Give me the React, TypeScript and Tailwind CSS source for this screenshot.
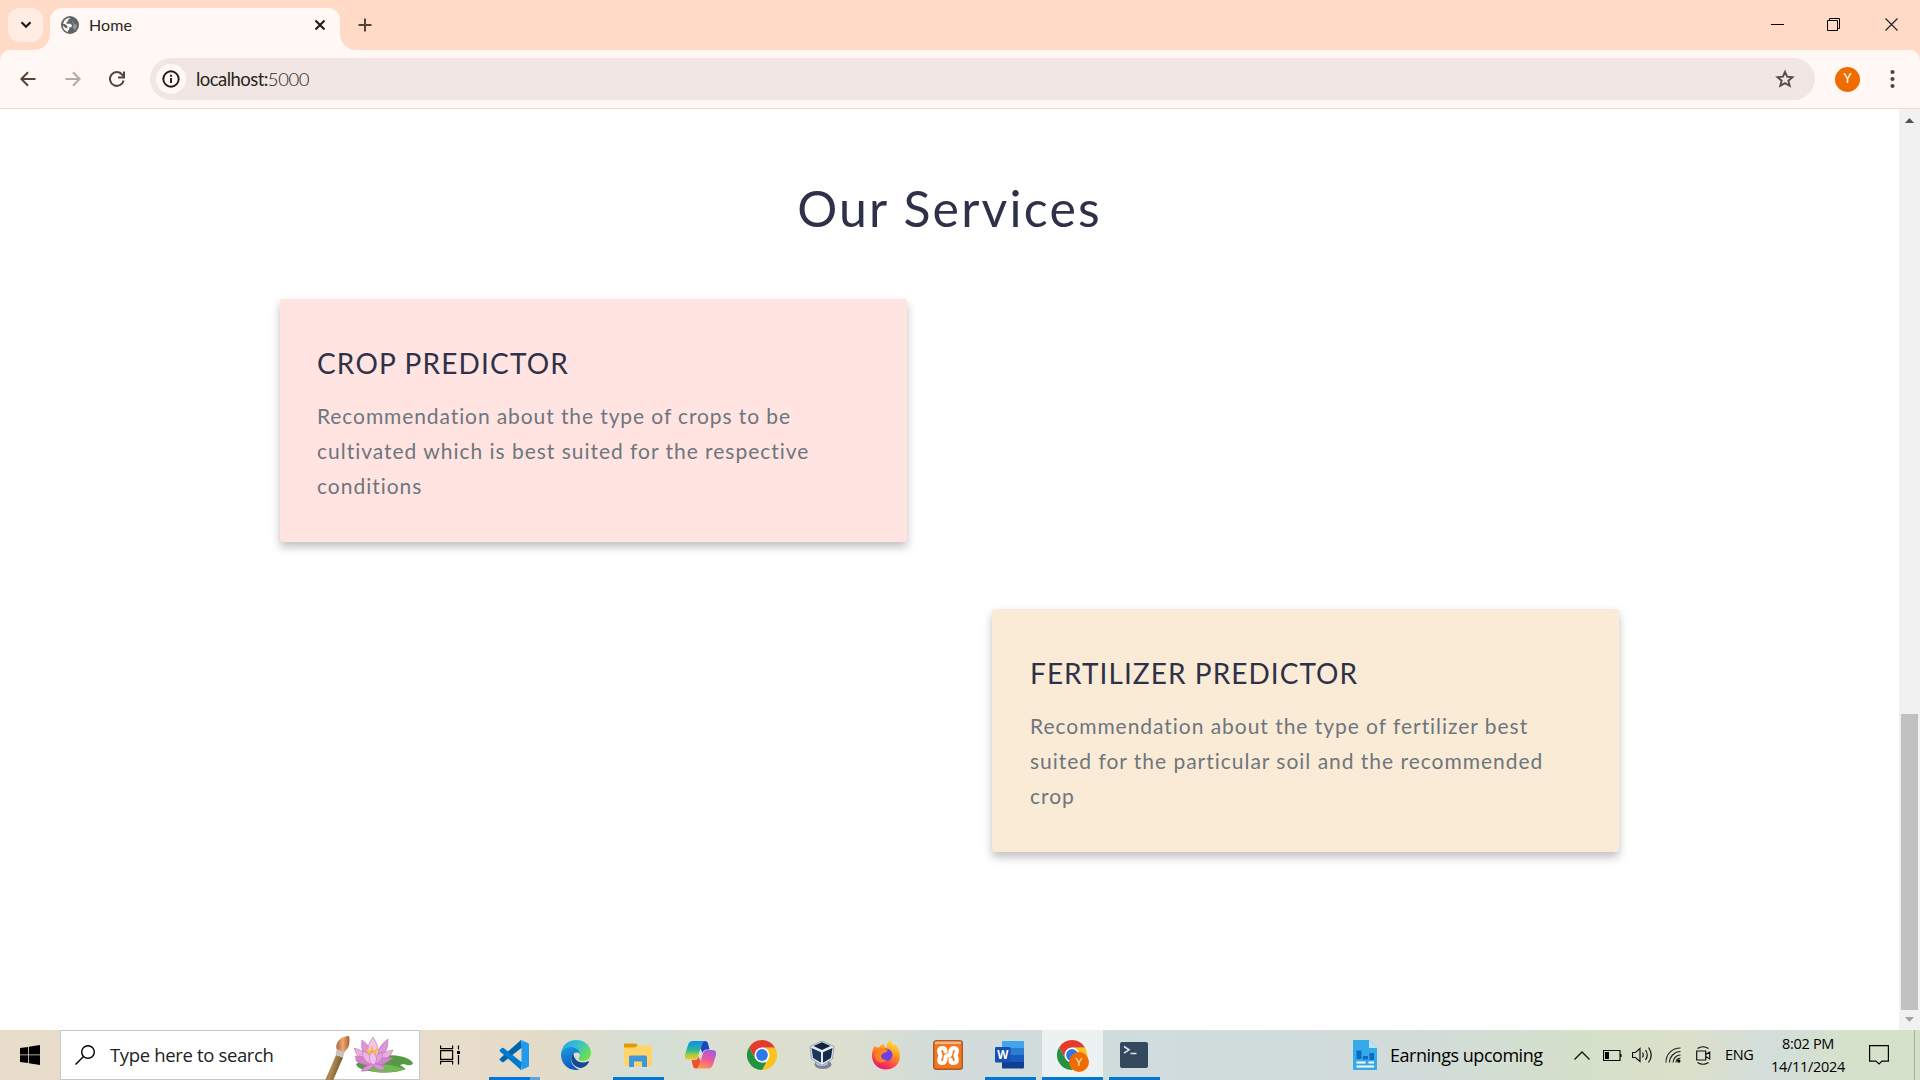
import React from "react";

const ui = "font-['Lato',sans-serif]";
const sys = "font-['Open_Sans',sans-serif]";

function TabStrip() {
  return (
    <div className="flex h-[50px] w-full items-start bg-[#ffdbc7]">
      <div className="mt-2 ml-2 flex h-[34px] w-[35px] items-center justify-center rounded-[12px] bg-[#ffece2]">
        <svg width="12" height="8" viewBox="0 0 12 8" fill="none" stroke="#221a15" strokeWidth="2.3"><path d="M1.5 1.2 6 5.7l4.500-4.500" /></svg>
      </div>
      <svg className="mt-[34px] ml-[-9px] shrink-0" width="16" height="16"><path d="M16 0v16H0C9 16 16 9 16 0z" fill="#fff8f5" /></svg>
      <div className="mt-[7.500px] flex h-[42.500px] w-[290px] shrink-0 items-center rounded-t-[12px] bg-[#fff8f5] pb-[8px] pl-[11px]">
        <svg className="shrink-0" width="18" height="18" viewBox="0 0 18 18">
          <circle cx="9" cy="9" r="9" fill="#5f6368" />
          <path d="M10 2.200C7.800 2.500 7 3.500 7.200 5L5.500 6.200v1.600h4l1.500 1.500-.6 2H8.200v2.200l-1.400 1.300v1.400C3.500 15 1.800 12.300 1.800 9.200l3 3h1.500V10L3.800 7.900l-1.600.1C2.600 4.500 5.500 1.800 9 1.700z" fill="#fff8f5" />
          <path d="M12.300 2.600v2.100l-1.800 1.500 2.200.4 1.300 1.600 2.200.6c0 2.500-1.200 4.400-3 5.700l-.5-2-1.200-1.100.8-2.200" fill="#fff8f5" opacity=".35" />
        </svg>
        <span className={`${ui} ml-[10px] w-[222px] shrink-0 text-[16px] leading-5 tracking-[0.100px] text-[#2b2521]`}>Home</span>
        <svg className="ml-[3px] shrink-0" width="12" height="12" viewBox="0 0 12 12" stroke="#221a15" strokeWidth="2.100"><path d="M1.500 1.500l9 9M10.500 1.500l-9 9" /></svg>
      </div>
      <svg className="mt-[34px] shrink-0" width="16" height="16"><path d="M0 0v16h16C7 16 0 9 0 0z" fill="#fff8f5" /></svg>
      <svg className="mt-[18px] ml-[2px]" width="14" height="14" viewBox="0 0 14 14" stroke="#564338" strokeWidth="2"><path d="M7 .5v13M.5 7h13" /></svg>
      <div className="grow" />
      <svg className="mt-[18px] mr-[43px]" width="13" height="13" stroke="#000" strokeWidth="1"><path d="M0 6.500h13" /></svg>
      <svg className="mt-[18px] mr-[45px]" width="13" height="13" fill="none" stroke="#000" strokeWidth="1"><path d="M.5 2.500h10v10H.500zM2.500 2.500V.500h10v10h-2" /></svg>
      <svg className="mt-[18px] mr-[22px]" width="13" height="13" stroke="#222" strokeWidth="1.200"><path d="M.5.500l12 12M12.500.500l-12 12" /></svg>
    </div>
  );
}

function Toolbar() {
  return (
    <div className="h-[59px] bg-[#ffdbc7]">
      <div className="flex h-[59px] items-center rounded-t-[10px] border-b border-[#fbd8c7] bg-[#fff8f5]">
        <svg className="ml-[20px]" width="16" height="16" viewBox="0 0 16 16" fill="none" stroke="#564338" strokeWidth="2"><path d="M15.500 8H1.500M8 1.200 1.400 8 8 14.800" /></svg>
        <svg className="ml-[29px]" width="16" height="16" viewBox="0 0 16 16" fill="none" stroke="#b5aaa5" strokeWidth="2"><path d="M.5 8h14M8 1.200 14.600 8 8 14.800" /></svg>
        <svg className="ml-[28px]" width="16" height="16" viewBox="0 0 16 16" fill="none" stroke="#564338" strokeWidth="2"><path d="M14.600 9.500A6.900 6.900 0 1 1 13.400 3.800l1.200 1.700" /><path d="M15 .5v6H9" /></svg>
        <div className="ml-[25px] flex h-[42px] w-[1665px] items-center rounded-full bg-[#f1e6e4] pl-[6px]">
          <div className="flex h-[30px] w-[30px] items-center justify-center rounded-full bg-[#fff8f5]">
            <svg width="18" height="18" viewBox="0 0 18 18" fill="none" stroke="#221a15" strokeWidth="1.900"><circle cx="9" cy="9" r="7.700" /><path d="M9 8v5M9 4.800v2" /></svg>
          </div>
          <div className={`${ui} ml-[10px] grow text-[18.500px] leading-6 tracking-[-0.550px] text-[#2b2420]`}>localhost:<span className="font-light tracking-[-0.400px]">5000</span></div>
          <svg className="mr-[20px]" width="20" height="20" viewBox="0 0 20 20" fill="none" stroke="#564c48" strokeWidth="1.900"><path d="M10 2.800l2.100 4.900 5.400.5-4.100 3.500 1.300 5.200L10 14.200l-4.700 2.700 1.300-5.200-4.100-3.500 5.400-.5z" /></svg>
        </div>
        <div className={`${ui} ml-5 flex h-[25px] w-[25px] items-center justify-center rounded-full bg-[#ef6c00] text-[13px] text-white`}>Y</div>
        <svg className="ml-[30px]" width="5" height="20" fill="#564338"><circle cx="2.500" cy="3" r="2.100" /><circle cx="2.500" cy="10" r="2.100" /><circle cx="2.500" cy="17" r="2.100" /></svg>
      </div>
    </div>
  );
}

type Line = { text: string; tracking: string };
type CardProps = { title: string; lines: Line[]; className: string; titleClass: string; };

function ServiceCard({ title, lines, className, titleClass }: CardProps) {
  return (
    <div className={`${ui} h-[243px] w-[627px] rounded-[3px] pt-[44px] shadow-[0_5px_10px_rgba(0,0,0,0.25)] ${className}`}>
      <h2 className={`text-[28px] leading-10 font-normal text-[#2f3148] ${titleClass}`}>{title}</h2>
      <p className="mt-[15px] text-[21px] leading-[35px] text-[#6e767d]">
        {lines.map((l) => (<span key={l.text} className={`block whitespace-nowrap ${l.tracking}`}>{l.text}</span>))}
      </p>
    </div>
  );
}

function Page() {
  return (
    <div className="flex h-[921px] bg-white">
      <main className="flex w-[1899px] flex-col">
        <h1 className={`${ui} mt-[69px] h-[60px] text-center text-[50px] leading-[60px] tracking-[2.200px] text-[#2f3148]`}>Our Services</h1>
        <ServiceCard className="mt-[61px] ml-[280px] bg-[#ffe4e1] pl-[37px]" titleClass="tracking-[1.170px]" title="CROP PREDICTOR"
          lines={[
            { text: "Recommendation about the type of crops to be", tracking: "tracking-[0.900px]" },
            { text: "cultivated which is best suited for the respective", tracking: "tracking-[0.980px]" },
            { text: "conditions", tracking: "tracking-[0.980px]" },
          ]} />
        <ServiceCard className="mt-[67px] ml-[992px] bg-[#faebd7] pl-[38px]" titleClass="tracking-[1.050px]" title="FERTILIZER PREDICTOR"
          lines={[
            { text: "Recommendation about the type of fertilizer best", tracking: "tracking-[0.960px]" },
            { text: "suited for the particular soil and the recommended", tracking: "tracking-[0.980px]" },
            { text: "crop", tracking: "tracking-[0.980px]" },
          ]} />
      </main>
      <div className="flex w-[21px] flex-col items-center bg-[#f1f1f1]">
        <svg className="mt-[9px]" width="9" height="5"><path d="M0 5h9L4.500 0z" fill="#505050" /></svg>
        <div className="mt-[591px] h-[296px] w-[17px] bg-[#c1c1c1]" />
        <svg className="mt-[7px]" width="9" height="5"><path d="M0 0h9L4.500 5z" fill="#a3a3a3" /></svg>
      </div>
    </div>
  );
}

const VSCode = () => (
  <svg width="30" height="30" viewBox="0 0 30 30">
    <path d="M22 0 1 18.500a1.200 1.200 0 0 0 0 1.800L3 22q.8.600 1.700 0L23 7.500z" fill="#0065a9" />
    <path d="M22 30 1 11.500a1.200 1.200 0 0 1 0-1.800L3 8q.8-.6 1.700 0L23 22.500z" fill="#007acc" />
    <path d="M22 0l7 3q1 .5 1 1.600v20.800q0 1.100-1 1.600l-7 3q-1 0-1.500-.7 2 1 2-1.400V2.100q0-2.400-2-1.400z" fill="#1f9cf0" />
  </svg>
);
const Edge = () => (
  <svg width="30" height="30" viewBox="0 0 30 30">
    <defs>
      <linearGradient id="eg1" x1="0" y1="0" x2="1" y2=".6"><stop offset="0" stopColor="#2a9fe0" /><stop offset=".5" stopColor="#35c1d0" /><stop offset="1" stopColor="#6be04e" /></linearGradient>
      <linearGradient id="eg2" x1="0" y1="0" x2=".4" y2="1"><stop offset="0" stopColor="#1b9de2" /><stop offset="1" stopColor="#0c59c0" /></linearGradient>
    </defs>
    <path d="M0 14C1 5 7 0 15 0c9 0 15 6 15 13 0 5-4 8-8 8-3 0-5-1-4.500-2.500C21 14 17 9 11 9 5 9 1 12 0 16z" fill="url(#eg1)" />
    <path d="M0 14.500C1 9 6 7 10 7c5 0 9 4 9 7-3-3-9-1-9 5 0 6 5 10 9 10.500C9 32 0 25 0 14.500z" fill="url(#eg2)" />
    <path d="M12.500 13C8 17 10 26 19 28c4 0 7-2.500 9-6 .4-.7 0-1-.8-.7-8 3.500-15-1.300-14.700-8.300z" fill="#114a94" />
  </svg>
);
const Folder = () => (
  <svg width="28" height="24" viewBox="0 0 28 24">
    <path d="M0 1.500Q0 .5 1 .5h11l2 2-2 2.500H0z" fill="#e09d00" />
    <path d="M0 4.500h11l3-2h13q1 0 1 1V22q0 1-1 1H1q-1 0-1-1z" fill="#ffd468" />
    <path d="M5 24V14q0-1.500 1.500-1.500h15Q23 12.500 23 14v10h-5v-5.500h-8V24z" fill="#3f97d8" />
  </svg>
);
const Copilot = () => (
  <svg width="31" height="28" viewBox="0 0 31 28">
    <defs>
      <linearGradient id="cp1" x1="0" y1="0" x2="0" y2="1"><stop offset="0" stopColor="#0a8fe8" /><stop offset=".5" stopColor="#2fb59a" /><stop offset=".75" stopColor="#a8cc3a" /><stop offset="1" stopColor="#f2c526" /></linearGradient>
      <linearGradient id="cp2" x1=".7" y1="0" x2=".3" y2="1"><stop offset="0" stopColor="#a05be0" /><stop offset=".5" stopColor="#f0589a" /><stop offset="1" stopColor="#fb9a48" /></linearGradient>
    </defs>
    <path d="M8 0h13q-3 0-4 3l-4 12q-1 3.500-4 3.500H4q-5 0-4-5L3 4Q4.200 0 8 0z" fill="url(#cp1)" />
    <path d="M23 27.500H10q3 0 4-3l4-12q1-3.500 4-3.500h5q5 0 4 5l-3 9.500q-1.200 4-5 4z" fill="url(#cp2)" />
    <path d="M15.500 7.500 17 3q1-3 3-3 2.500 0 3.200 3l1.300 5.500h-3q-3 0-4 3.500z" fill="#1748c0" />
    <path d="M15.500 20 14 24.500q-1 3-3 3-2.500 0-3.200-3L6.500 19h3q3 0 4-3.500z" fill="#ee5130" />
  </svg>
);
const Chrome = ({ badge = false }: { badge?: boolean }) => (
  <svg width={badge ? 32 : 30} height={badge ? 32 : 30} viewBox={badge ? "0 0 32 32" : "0 0 30 30"}>
    <path d="M15 7.500h13A15 15 0 0 1 15 30l6.500-11.300z" fill="#fcc31e" />
    <path d="M15 0a15 15 0 0 1 13 7.500H15L8.500 18.700 2 7.500A15 15 0 0 1 15 0z" fill="#e33b2e" />
    <path d="M2 7.500l6.500 11.300L15 22.500h4.300L15 30A15 15 0 0 1 2 7.500z" fill="#229342" />
    <circle cx="15" cy="15" r="7.500" fill="#fff" /><circle cx="15" cy="15" r="5.900" fill="#2f78ea" />
    {badge && <><circle cx="22" cy="22" r="10" fill="#ef6c00" /><text x="22" y="26" fontSize="11" fontFamily="Lato" textAnchor="middle" fill="#ffe3cc">Y</text></>}
  </svg>
);
const VBox = () => (
  <svg className="relative -left-[2px]" width="26" height="30" viewBox="0 0 26 30">
    <ellipse cx="14" cy="24.500" rx="8.500" ry="4.500" fill="#7c849a" /><ellipse cx="13" cy="23" rx="6" ry="3" fill="#c4cad6" />
    <path d="M13 1 25 6.500 23.500 19 13 25.500 2.500 19 1 6.500z" fill="#e4e9f1" stroke="#8693aa" strokeWidth=".8" />
    <path d="M13 2.200 21.500 6 13 10 4.500 6z" fill="#10233f" />
    <path d="M2.500 8 12 12.300V22.800L4 18z" fill="#1d365d" />
    <path d="M23.500 8 14 12.300V22.800L22 18z" fill="#142b4c" />
  </svg>
);
const Firefox = () => (
  <svg width="30" height="30" viewBox="0 0 30 30">
    <defs><linearGradient id="ff" x1=".8" y1="0" x2=".3" y2="1"><stop offset="0" stopColor="#ffe838" /><stop offset=".4" stopColor="#ff9a20" /><stop offset=".75" stopColor="#ff3e4e" /><stop offset="1" stopColor="#e5127a" /></linearGradient></defs>
    <path d="M3.500 6C5 7 6 7.500 8 7.500c1.500-2 3-3 5-3.500 0 2 1 3 3 4C15 4 17 2 19.500 0c.5 3 2 4 4 6 0-1 0-2-.5-3 4 4 6 8 6 13 0 8-6 13.500-14 13.500S1 23.500 1 16c0-4 1-7 2.500-10z" fill="url(#ff)" />
    <circle cx="15" cy="15" r="6.500" fill="#7340dd" />
    <path d="M4 9q4-2 8-.5 2 1 5 1-1 3-4 3.500-3 1-3 3.500 1 4 6 3.500-4 4-9 1.500C3 19 3 13 4 9z" fill="#ff8420" />
  </svg>
);
const Xampp = () => (
  <svg width="30" height="30" viewBox="0 0 30 30">
    <rect x=".7" y=".7" width="28.600" height="28.600" rx="2.500" fill="#f2771e" stroke="#a9592a" strokeWidth="1.400" />
    <path d="M2 1.500h26v2.500H2z" fill="#f9b27e" />
    <g fill="none" stroke="#fff" strokeWidth="4.200" strokeLinecap="round" strokeLinejoin="round">
      <path d="M12.500 11.500C12.500 9 11.500 8 9.500 8 6.500 8 5.500 10 6.500 12.500L7.500 15.500l-1 3C5.500 21 6.500 23 9 23c2.500 0 3.500-1.500 3.500-4.500q0-3 2.500-3" />
      <path d="M17.500 19.500c0 2.500 1 3.500 3 3.500 3 0 4-2 3-4.500l-1-3 1-3C24.500 10 23.500 8 21 8c-2.500 0-3.500 1.500-3.500 4.500q0 3-2.500 3" />
    </g>
  </svg>
);
const Word = () => (
  <svg width="30" height="28" viewBox="0 0 30 28">
    <path d="M7 1q0-1 1-1h20q1 0 1 1v6H7z" fill="#41a5ee" /><path d="M7 7h22v7H7z" fill="#2b7cd3" /><path d="M7 14h22v7H7z" fill="#185abd" /><path d="M7 21h22v5.500q0 1-1 1H8q-1 0-1-1z" fill="#103f91" />
    <rect y="6" width="15.500" height="15.500" rx="1" fill="#1651b0" />
    <text x="7.700" y="17.800" textAnchor="middle" fontFamily="Open Sans" fontWeight="700" fontSize="11.500" fill="#fff">W</text>
  </svg>
);
const Terminal = () => (
  <svg width="28" height="26" viewBox="0 0 28 26">
    <rect width="28" height="26" rx="2" fill="#34495e" /><path d="M4 4.500l5 3.300-5 3.300M10.500 11.500h6" stroke="#dfe6ea" strokeWidth="1.600" fill="none" />
  </svg>
);

type AppSlot = { icon: React.ReactNode; bar: string; box?: string };
const apps: AppSlot[] = [
  { icon: <VSCode />, bar: "w-[51px] bg-linear-to-r from-[#0078d7] from-80% to-[#5ba5e2] to-80%" },
  { icon: <Edge />, bar: "w-0" },
  { icon: <Folder />, bar: "w-[51px] bg-[#0078d7]" },
  { icon: <Copilot />, bar: "w-0" },
  { icon: <Chrome />, bar: "w-0" },
  { icon: <VBox />, bar: "w-0" },
  { icon: <Firefox />, bar: "w-0" },
  { icon: <Xampp />, bar: "w-0" },
  { icon: <Word />, bar: "w-[51px] bg-[#0078d7]" },
  { icon: <div className="pt-[2px] pl-[2px]"><Chrome badge /></div>, bar: "w-[61px] bg-[#0078d7]", box: "bg-[#edf1f1]" },
  { icon: <Terminal />, bar: "w-[51px] bg-[#0078d7]" },
];

const Brush = () => (
  <svg width="28" height="48" viewBox="0 0 28 48">
    <defs>
      <linearGradient id="hd" x1="0" y1="0" x2="1" y2=".4"><stop offset="0" stopColor="#70502c" /><stop offset=".5" stopColor="#b08d54" /><stop offset="1" stopColor="#6a4a28" /></linearGradient>
      <linearGradient id="br" x1="0" y1="0" x2="1" y2="0"><stop offset="0" stopColor="#b0683c" /><stop offset=".5" stopColor="#eca972" /><stop offset="1" stopColor="#a85b30" /></linearGradient>
    </defs>
    <path d="M12 20l7 2.500L8 48H0z" fill="url(#hd)" />
    <path d="M13 13l8 3.500-2 6-7.500-3z" fill="#c9c3bf" />
    <path d="M12.500 14C11 7 17 1 25 1c1 5 1 12-5 16z" fill="url(#br)" />
  </svg>
);
const Lotus = () => (
  <svg width="60" height="36" viewBox="0 0 60 36">
    <path d="M3 27q10-8 30-9 22 0 27 8-1 4-9 1l-4 1 6 4q-12 5-30 3Q4 33 3 27z" fill="#559b43" />
    <path d="M10 31q16-8 42 1-14 5-30 3z" fill="#74b758" />
    <g stroke="#b564ae" strokeWidth=".5">
      <path d="M20 26Q6 18 9 3q9 6 13 20z" fill="#dc97d6" /><path d="M20 26Q36 18 35 2q-9 6-14 20z" fill="#dc97d6" />
      <path d="M20 27Q4 24 1 11q11 2 20 14z" fill="#e7aee2" /><path d="M20 27q16-2 20-14-12 1-20 12z" fill="#e7aee2" />
      <path d="M20 26Q9 14 20 0q10 14 1 26z" fill="#f2c5ec" />
      <path d="M20 28Q13 30 3 24q0-5-1-5 12 0 18 7z" fill="#d283ca" /><path d="M20 28q10 2 20-7-11-2-20 5z" fill="#d283ca" />
    </g>
    <path d="M15 18l-2-7 4 3 2-6 2 6 4-4-2 8z" fill="#f4bf34" />
    <g stroke="#b564ae" strokeWidth=".5">
      <path d="M20 28Q8 24 10 14q9 3 11 13z" fill="#edb5e6" /><path d="M20 28q12-4 9-13-8 3-9 12z" fill="#e3a0db" />
      <path d="M19 27q-8 2-11 7 9 1 13-6z" fill="#dc92d3" /><path d="M21 27q9 0 11 5-8 3-12-4z" fill="#dc92d3" /><path d="M20 28Q13 22 19 14q8 7 2 14z" fill="#f0c0ea" />
    </g>
  </svg>
);

function Taskbar() {
  return (
    <div className={`${sys} flex h-[50px] items-center bg-[linear-gradient(90deg,#e8dccb_0%,#e8dccb_24%,#e3dbc7_28%,#d5dfd7_34%,#dbdfd0_38%,#dddfcf_44%,#d1dcda_49%,#d0dcdd_60%,#d1dcda_74%,#d4e0ca_82%,#dbe0ca_88%,#d3dedb_92%,#d6e1cc_96%,#d4e0c8_100%)] text-black`}>
      <div className="flex w-[60px] shrink-0 items-center justify-center">
        <svg width="20" height="20" viewBox="0 0 20 20"><path d="M0 3l8-1v7.500H0zM8.800 1.800 20 0v9.500H8.800zM0 10.300h8v7.700l-8-1zM8.800 10.300H20V20L8.800 18.200z" /></svg>
      </div>
      <div className="flex h-[50px] w-[360px] shrink-0 items-center border border-[#c8c8ca] bg-white">
        <svg className="ml-[14px] shrink-0" width="20" height="20" viewBox="0 0 20 20" fill="none" stroke="#000" strokeWidth="1.400"><circle cx="13" cy="7" r="6.300" /><path d="M8.500 11.500.5 19.500" /></svg>
        <span className="ml-[15px] w-[199px] shrink-0 text-[18.500px] leading-6 tracking-[-0.350px] whitespace-nowrap text-[#222]">Type here to search</span>
        <div className="ml-[15px] pt-[8px]"><Brush /></div>
        <div className="ml-[1px]"><Lotus /></div>
      </div>
      <svg className="ml-5" width="20" height="20" viewBox="0 0 20 20" fill="none" stroke="#000" strokeWidth="1.200"><path d="M.6.500v3.100h12V.500M.6 19.500v-3.100h12v3.100M.6 5.600h12v8.800H.600zM18.500.500v4M18.500 10v9.500" /><path d="M17 6h3v3h-3z" fill="#000" stroke="none" /></svg>
      <div className="ml-[23px] flex">
        {apps.map((a, i) => (
          <div key={i} className="flex h-[50px] w-[62px] justify-center">
            <div className={`flex h-[50px] w-[61px] flex-col items-center ${a.box ?? ""}`}>
              <div className="flex h-[47px] items-center pt-[3px]">{a.icon}</div>
              <div className={`h-[3px] ${a.bar}`} />
            </div>
          </div>
        ))}
      </div>
      <svg className="ml-[188px] shrink-0" width="24" height="30" viewBox="0 0 24 30">
        <path d="M0 1q0-1 1-1h15l8 8v21q0 1-1 1H1q-1 0-1-1z" fill="#35a9ea" /><path d="M16 0l8 8h-8z" fill="#bfe3fa" />
        <path d="M3.500 10.500h5v8.500h-5zM10 16h5v3.500h-5zM16.500 13h4.500v7h-4.500z" fill="#0b6cc4" />
        <path d="M3.500 22.500h9M15.500 22.500H21M3.500 26.500H21" stroke="#fff" strokeWidth="1.800" />
      </svg>
      <span className="ml-[13px] w-[184px] shrink-0 text-[18px] leading-6 tracking-[-0.470px] whitespace-nowrap">Earnings upcoming</span>
      <svg className="shrink-0" width="16" height="9" fill="none" stroke="#111" strokeWidth="1.300"><path d="M.5 8.500 8 1l7.500 7.500" /></svg>
      <svg className="ml-[13px] shrink-0" width="19" height="11" fill="none" stroke="#111"><path d="M.5.500h16.500v10H.500zM18 4v3" strokeWidth="1.200" /><path d="M2 2h4v7H2z" fill="#000" stroke="none" /></svg>
      <svg className="ml-[10px] shrink-0" width="21" height="18" viewBox="0 0 21 18" fill="none" stroke="#111" strokeWidth="1.200"><path d="M.6 6.500h2.800L8 2.500v13l-4.600-4H.600zM10.500 6.500q1.500 2.500 0 5M13.500 4q3.500 5 0 10M16.500 1.500q5.500 7.500 0 15" /></svg>
      <svg className="ml-[12px] shrink-0" width="16" height="16" viewBox="0 0 16 16" fill="none" stroke="#222" strokeWidth="1.100"><path d="M1 15.500C1 7 7 1 15.500 1M4.500 15.500c0-6 5-11 11-11M8 15.500c0-4 3.500-7.500 7.500-7.500M11 15.500q0-4 4.500-4.500" /><circle cx="13.800" cy="14" r="1.700" fill="#000" stroke="none" /></svg>
      <svg className="ml-[15px] shrink-0" width="15" height="19" viewBox="0 0 15 19" fill="none" stroke="#111" strokeWidth="1.200"><path d="M.7 5h9v9h-9zM9.700 8.500l4-2.500v7l-4-2.500M1.500 2.500q5.500-3.500 11 0M1.500 16.500q5.500 3.500 11 0" /></svg>
      <span className="ml-[14px] w-[41px] shrink-0 text-[14.500px] tracking-[-0.400px]">ENG</span>
      <div className="w-[84px] shrink-0 text-center text-[14.500px] leading-[23px] tracking-[-0.300px] whitespace-nowrap"><div>8:02 PM</div><div>14/11/2024</div></div>
      <svg className="ml-[19px] shrink-0" width="20" height="20" viewBox="0 0 20 20" fill="none" stroke="#000" strokeWidth="1.200"><path d="M.6.600h18.800v15.500H13L10 19l-3-2.900H.600z" /></svg>
      <div className="ml-[25px] h-[50px] w-px shrink-0 bg-[#a9b3a2]" />
    </div>
  );
}

export default function App() {
  return (
    <div className="h-[1080px] w-[1920px] overflow-hidden bg-white">
      <TabStrip />
      <Toolbar />
      <Page />
      <Taskbar />
    </div>
  );
}
